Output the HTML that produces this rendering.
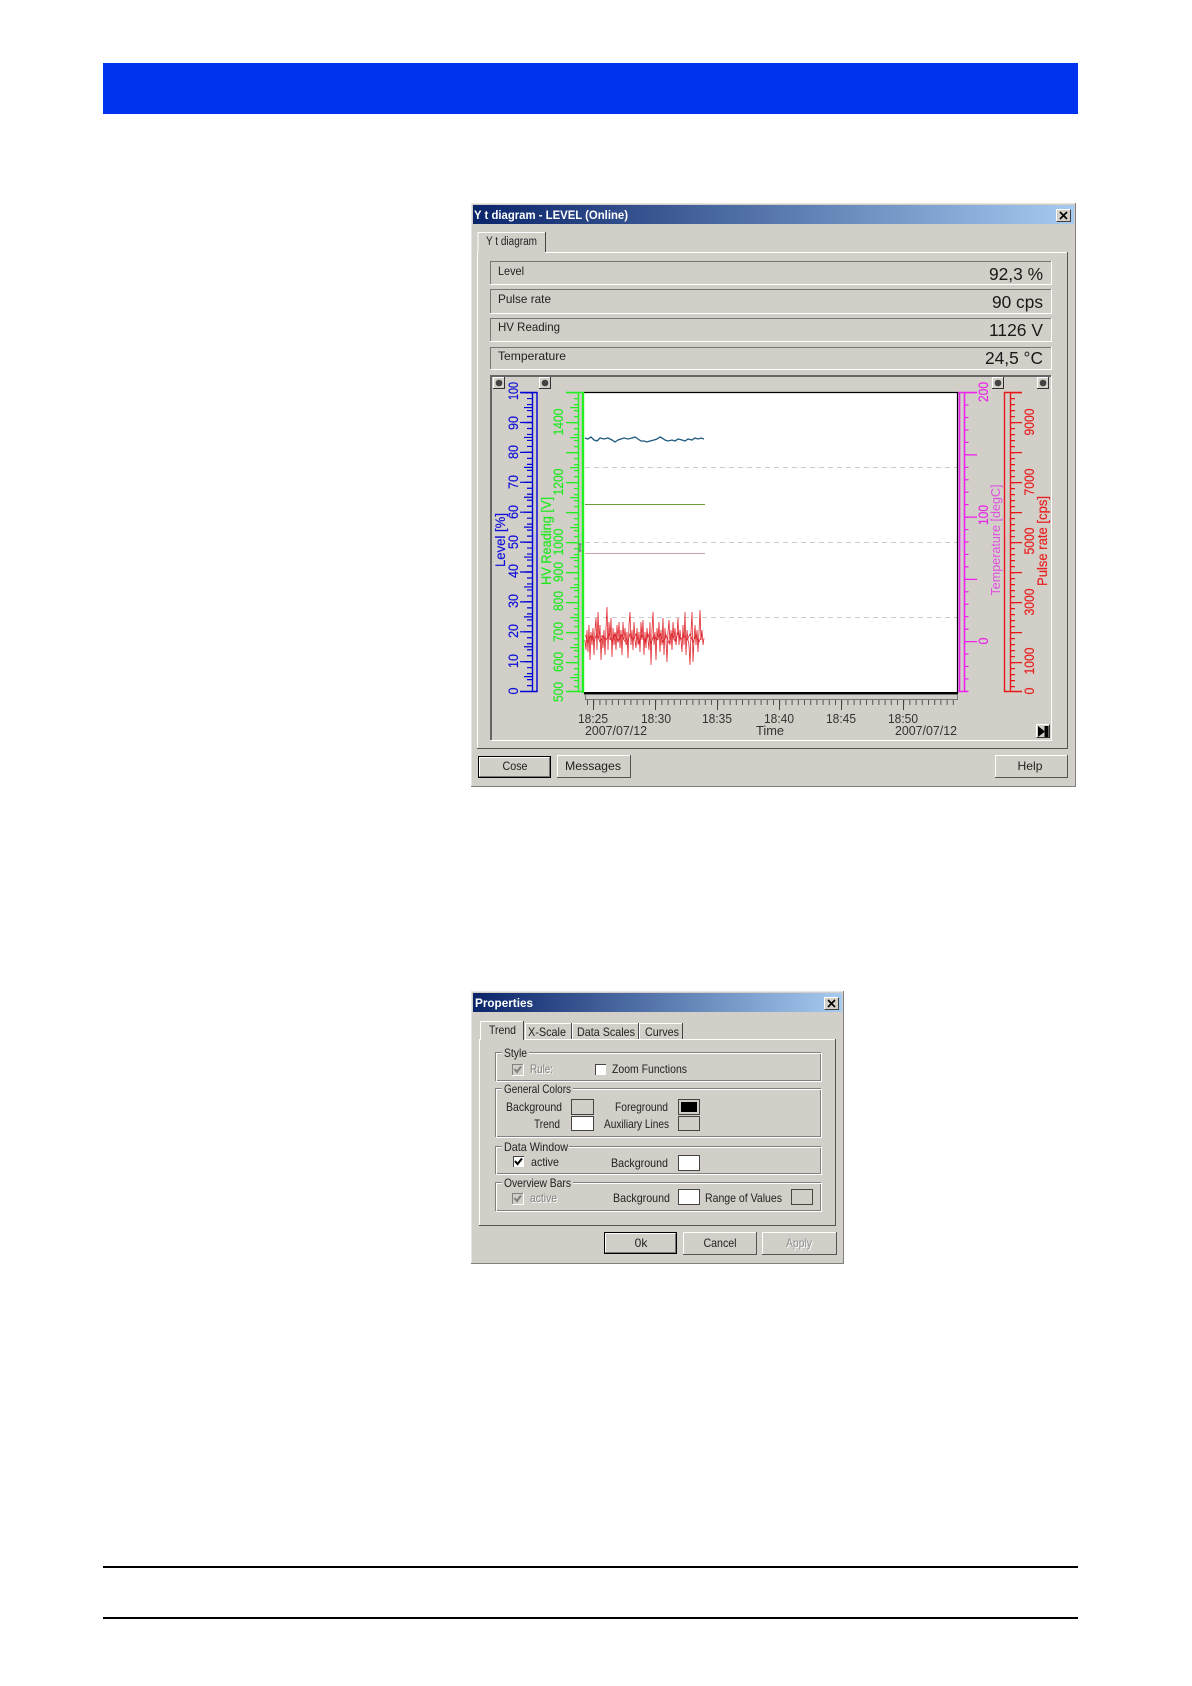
<!DOCTYPE html>
<html><head><meta charset="utf-8"><style>
html,body{margin:0;padding:0;background:#fff}
svg{display:block}
text{font-family:"Liberation Sans",sans-serif}
</style></head><body>
<svg width="1192" height="1686" viewBox="0 0 1192 1686" xmlns="http://www.w3.org/2000/svg">
<defs>
<linearGradient id="tb"><stop offset="0" stop-color="#0a246a"/><stop offset="1" stop-color="#a6caf0"/></linearGradient>
<g id="dot"><rect x="0" y="0" width="12" height="12" fill="#d4d0c8"/><path d="M.5 11.5V.5H11.5" fill="none" stroke="#fff"/><path d="M0 11.5H11.5V0" fill="none" stroke="#333"/><circle cx="6" cy="6" r="3.3" fill="#444"/></g>
<g id="xb"><rect width="15" height="13" fill="#d4d0c8"/><path d="M.5 12.5V.5H14.5" fill="none" stroke="#fff"/><path d="M.5 12.5H14.5V.5" fill="none" stroke="#404040"/><path d="M4 3L11 10M11 3L4 10" stroke="#000" stroke-width="1.6"/></g>
</defs>
<rect width="1192" height="1686" fill="#fff"/>
<rect x="103" y="63" width="975" height="51" fill="#0033ee"/>
<rect x="103" y="1566" width="975" height="2" fill="#000"/>
<rect x="103" y="1617" width="975" height="2" fill="#000"/>

<!-- Window 1 -->
<rect x="471" y="203" width="605" height="584" fill="#d2cfc8"/>
<path d="M471.5 787V203.5H1076" fill="none" stroke="#e8e6e0"/>
<path d="M471 786.5H1075.5V203" fill="none" stroke="#808080"/>
<rect x="473" y="205" width="601" height="19" fill="url(#tb)"/>
<text x="474" y="219" font-size="12" font-weight="bold" fill="#fff" textLength="154" lengthAdjust="spacingAndGlyphs">Y t diagram - LEVEL  (Online)</text>
<use href="#xb" x="1056" y="209"/>
<!-- Panel -->
<path d="M477.5 748V252.5H1067" fill="none" stroke="#fff"/>
<path d="M477 748.5H1067.5V252" fill="none" stroke="#555"/>
<rect x="478" y="233" width="67" height="20" fill="#d2cfc8"/>
<path d="M478 252.5V232.5H545" fill="none" stroke="#fff"/>
<path d="M545.5 232V252" fill="none" stroke="#444"/>
<text x="486" y="245" font-size="11.5" fill="#222" textLength="51" lengthAdjust="spacingAndGlyphs">Y t diagram</text>

<!-- Rows -->
<g fill="none" stroke-width="1">
<path d="M490.5 284V261.5H1051" stroke="#777"/><path d="M490 284.5H1051.5V261" stroke="#fff"/>
<path d="M490.5 313V289.5H1051" stroke="#777"/><path d="M490 313.5H1051.5V289" stroke="#fff"/>
<path d="M490.5 341V318.5H1051" stroke="#777"/><path d="M490 341.5H1051.5V318" stroke="#fff"/>
<path d="M490.5 369V347.5H1051" stroke="#777"/><path d="M490 369.5H1051.5V347" stroke="#fff"/>
</g>
<g font-size="12" fill="#222">
<text x="498" y="275" textLength="26" lengthAdjust="spacingAndGlyphs">Level</text>
<text x="498" y="303" textLength="53" lengthAdjust="spacingAndGlyphs">Pulse rate</text>
<text x="498" y="331" textLength="62" lengthAdjust="spacingAndGlyphs">HV Reading</text>
<text x="498" y="360" textLength="68" lengthAdjust="spacingAndGlyphs">Temperature</text>
</g>
<g font-size="17.5" fill="#1a1a1a">
<text x="989" y="280" textLength="54" lengthAdjust="spacingAndGlyphs">92,3 %</text>
<text x="992" y="308" textLength="51" lengthAdjust="spacingAndGlyphs">90 cps</text>
<text x="989" y="336" textLength="54" lengthAdjust="spacingAndGlyphs">1126 V</text>
<text x="985" y="364" textLength="58" lengthAdjust="spacingAndGlyphs">24,5 °C</text>
</g>

<!-- Chart box -->
<path d="M491 740V376H1051" fill="none" stroke="#666" stroke-width="2"/>
<path d="M491 740.5H1051.5V376" fill="none" stroke="#fff"/>
<use href="#dot" x="493" y="377"/><use href="#dot" x="539" y="377"/><use href="#dot" x="992" y="377"/><use href="#dot" x="1037" y="377"/>
<rect x="1036" y="724" width="14" height="14" fill="#d4d0c8"/>
<path d="M1036.5 737.5V724.5H1049.5" fill="none" stroke="#fff"/><path d="M1036.5 737.5H1049.5V724.5" fill="none" stroke="#333"/>
<path d="M1038 726V737L1045 731.5ZM1044.5 726h4v11h-4z" fill="#000"/>

<!-- Plot -->
<rect x="583" y="392" width="375" height="301" fill="#fff"/>
<g stroke="#ccc" stroke-dasharray="5 4" stroke-width="1">
<path d="M585 467.5H958"/><path d="M585 542.5H958"/><path d="M585 617.5H958"/>
</g>
<path d="M584 392.5H957.5V693" fill="none" stroke="#000" stroke-width="1.2"/>
<rect x="584" y="692" width="374" height="2.5" fill="#000"/>
<polyline fill="none" stroke="#1e5a80" stroke-width="1.3" points="585,438 588,439 591,437 594,440 597,441 600,438 604,439 608,438 612,440 615,442 618,440 621,439 624,438 628,439 632,438 635,437 638,439 641,441 644,441 647,442 650,441 654,440 657,439 660,437 662,438 665,440 668,441 672,440 675,441 678,439 682,440 685,441 688,439 692,440 695,438 698,439 701,438 704,439"/>
<path d="M585 504.5H705" stroke="#6a9a3a" stroke-width="1"/>
<path d="M585 553.5H705" stroke="#c9a4a8" stroke-width="1"/>
<polyline fill="none" stroke="#e0282e" stroke-width=".8" points="585,640 586,650 587,630 588,652 589,625 590,660 591,632 592,645 593,628 594,655 595,630 596,618 597,650 598,612 599,640 600,625 601,660 602,635 603,648 604,630 605,655 606,628 607,607 608,650 609,622 610,640 611,618 612,657 613,628 614,645 615,632 616,650 617,625 618,640 619,622 620,648 621,630 622,655 623,622 624,640 625,628 626,645 627,632 628,658 629,625 630,612 631,645 632,630 633,650 634,622 635,640 636,648 637,628 638,645 639,632 640,652 641,622 642,640 643,620 644,655 645,632 646,648 647,628 648,640 649,650 650,622 651,665 652,630 653,612 654,645 655,632 656,660 657,628 658,640 659,622 660,652 661,630 662,645 663,618 664,655 665,628 666,640 667,662 668,632 669,620 670,645 671,630 672,650 673,622 674,640 675,628 676,645 677,635 678,618 679,645 680,630 681,640 682,652 683,625 684,645 685,612 686,655 687,630 688,640 689,645 690,665 691,632 692,612 693,662 694,640 695,625 696,645 697,630 698,652 699,632 700,610 701,640 702,630 703,645 704,638"/>
<polyline fill="none" stroke="#d8222a" stroke-width=".8" points="585.5,635 588,643 591,635 594,641 597,634 600,642 603,636 606,640 609,634 612,642 615,633 618,642 621,634 624,640 627,644 630,634 633,640 636,634 639,643 642,634 645,642 648,634 651,643 654,635 657,640 660,634 663,642 666,635 669,643 672,634 675,641 678,633 681,640 684,635 687,640 690,634 693,642 696,635 699,642 702,635"/>

<!-- X axis -->
<rect x="585.5" y="694.5" width="372" height="5" fill="#d2cfc8" stroke="#777"/>
<path d="M587 702.5H958" stroke="#555" stroke-width="5" stroke-dasharray="1 5.2"/>
<path d="M593 705H958" stroke="#444" stroke-width="10" stroke-dasharray="1 61"/>
<g font-size="13" fill="#333" text-anchor="middle">
<text x="593" y="723" textLength="30" lengthAdjust="spacingAndGlyphs">18:25</text>
<text x="656" y="723" textLength="30" lengthAdjust="spacingAndGlyphs">18:30</text>
<text x="717" y="723" textLength="30" lengthAdjust="spacingAndGlyphs">18:35</text>
<text x="779" y="723" textLength="30" lengthAdjust="spacingAndGlyphs">18:40</text>
<text x="841" y="723" textLength="30" lengthAdjust="spacingAndGlyphs">18:45</text>
<text x="903" y="723" textLength="30" lengthAdjust="spacingAndGlyphs">18:50</text>
<text x="616" y="735" textLength="62" lengthAdjust="spacingAndGlyphs">2007/07/12</text>
<text x="770" y="735" textLength="28" lengthAdjust="spacingAndGlyphs">Time</text>
<text x="926" y="735" textLength="62" lengthAdjust="spacingAndGlyphs">2007/07/12</text>
</g>

<!-- Blue axis -->
<g stroke="#0000d8" fill="none">
<rect x="532" y="534" width="5" height="16" fill="#c8c6d6" stroke="none"/>
<path d="M520 392.5H537V691.5H520M532.5 392V692" stroke-width="1.4"/>
<path d="M529.5 392V692" stroke-width="5" stroke-dasharray="1.2 4.78"/>
<path d="M528 392V692" stroke-width="8" stroke-dasharray="1.2 13.75"/>
<path d="M526 392V692" stroke-width="12" stroke-dasharray="1.2 28.7"/>
</g>
<g font-size="13.5" fill="#1010d8" stroke="#1010d8" stroke-width=".2" text-anchor="middle">
<text transform="translate(518,391) rotate(-90)" textLength="18" lengthAdjust="spacingAndGlyphs">100</text>
<text transform="translate(518,423) rotate(-90)" textLength="14" lengthAdjust="spacingAndGlyphs">90</text>
<text transform="translate(518,452) rotate(-90)" textLength="14" lengthAdjust="spacingAndGlyphs">80</text>
<text transform="translate(518,482) rotate(-90)" textLength="14" lengthAdjust="spacingAndGlyphs">70</text>
<text transform="translate(518,512) rotate(-90)" textLength="14" lengthAdjust="spacingAndGlyphs">60</text>
<text transform="translate(518,542) rotate(-90)" textLength="14" lengthAdjust="spacingAndGlyphs">50</text>
<text transform="translate(518,571) rotate(-90)" textLength="14" lengthAdjust="spacingAndGlyphs">40</text>
<text transform="translate(518,601) rotate(-90)" textLength="14" lengthAdjust="spacingAndGlyphs">30</text>
<text transform="translate(518,631) rotate(-90)" textLength="14" lengthAdjust="spacingAndGlyphs">20</text>
<text transform="translate(518,661) rotate(-90)" textLength="14" lengthAdjust="spacingAndGlyphs">10</text>
<text transform="translate(518,691) rotate(-90)" textLength="7" lengthAdjust="spacingAndGlyphs">0</text>
<text transform="translate(505,540) rotate(-90)" textLength="54" lengthAdjust="spacingAndGlyphs">Level [%]</text>
</g>

<!-- Green axis -->
<g stroke="#22ee22" fill="none">
<rect x="578" y="534" width="5" height="16" fill="#c8cec8" stroke="none"/>
<path d="M566 392.5H583M566 691.5H583M578.5 392V692" stroke-width="1.4"/>
<path d="M583 392V693" stroke-width="2.4"/>
<path d="M576 392V692" stroke-width="4" stroke-dasharray="1.2 4.8"/>
<path d="M574 392V692" stroke-width="8" stroke-dasharray="1.2 13.8"/>
<path d="M572 392V692" stroke-width="12" stroke-dasharray="1.2 28.8"/>
</g>
<path d="M580 544V551M578.5 544H581.5M578.5 551H581.5" stroke="#666" stroke-width="1" fill="none"/>
<g font-size="13.5" fill="#22e822" stroke="#22e822" stroke-width=".2" text-anchor="middle">
<text transform="translate(563,422) rotate(-90)" textLength="27" lengthAdjust="spacingAndGlyphs">1400</text>
<text transform="translate(563,482) rotate(-90)" textLength="27" lengthAdjust="spacingAndGlyphs">1200</text>
<text transform="translate(563,542) rotate(-90)" textLength="27" lengthAdjust="spacingAndGlyphs">1000</text>
<text transform="translate(563,572) rotate(-90)" textLength="20" lengthAdjust="spacingAndGlyphs">900</text>
<text transform="translate(563,601) rotate(-90)" textLength="20" lengthAdjust="spacingAndGlyphs">800</text>
<text transform="translate(563,632) rotate(-90)" textLength="20" lengthAdjust="spacingAndGlyphs">700</text>
<text transform="translate(563,662) rotate(-90)" textLength="20" lengthAdjust="spacingAndGlyphs">600</text>
<text transform="translate(563,692) rotate(-90)" textLength="20" lengthAdjust="spacingAndGlyphs">500</text>
<text transform="translate(551,541) rotate(-90)" textLength="88" lengthAdjust="spacingAndGlyphs">HV Reading [V]</text>
</g>

<!-- Magenta axis -->
<g stroke="#ee22ee" fill="none">
<rect x="959" y="534" width="5" height="16" fill="#d8c4d8" stroke="none"/>
<path d="M959.5 392V692M964.5 392V692M958 392.5H977M958 691.5H968" stroke-width="1.6"/>
<path d="M966.5 392V692" stroke-width="4" stroke-dasharray="1.2 11.25"/>
<path d="M971 392V692" stroke-width="12" stroke-dasharray="1.2 61.05"/>
</g>
<g font-size="13.5" fill="#e828e8" stroke="#e828e8" stroke-width=".2" text-anchor="middle">
<text transform="translate(988,392) rotate(-90)" textLength="20" lengthAdjust="spacingAndGlyphs">200</text>
<text transform="translate(988,515) rotate(-90)" textLength="20" lengthAdjust="spacingAndGlyphs">100</text>
<text transform="translate(988,641) rotate(-90)" textLength="7" lengthAdjust="spacingAndGlyphs">0</text>
<text transform="translate(1000,540) rotate(-90)" textLength="111" lengthAdjust="spacingAndGlyphs" font-size="13" stroke-width="0" fill="#e050e0">Temperature [degC]</text>
</g>

<!-- Red axis -->
<g stroke="#e81818" fill="none">
<rect x="1005" y="534" width="5" height="16" fill="#d8c8c4" stroke="none"/>
<path d="M1022 392.5H1004.5V691.5H1022M1010.5 392V692" stroke-width="1.4"/>
<path d="M1012.5 392V692" stroke-width="5" stroke-dasharray="1.2 4.8"/>
<path d="M1016 392V692" stroke-width="12" stroke-dasharray="1.2 28.8"/>
</g>
<g font-size="13.5" fill="#e82020" stroke="#e82020" stroke-width=".2" text-anchor="middle">
<text transform="translate(1034,422) rotate(-90)" textLength="27" lengthAdjust="spacingAndGlyphs">9000</text>
<text transform="translate(1034,482) rotate(-90)" textLength="27" lengthAdjust="spacingAndGlyphs">7000</text>
<text transform="translate(1034,541) rotate(-90)" textLength="27" lengthAdjust="spacingAndGlyphs">5000</text>
<text transform="translate(1034,602) rotate(-90)" textLength="27" lengthAdjust="spacingAndGlyphs">3000</text>
<text transform="translate(1034,661) rotate(-90)" textLength="27" lengthAdjust="spacingAndGlyphs">1000</text>
<text transform="translate(1034,691) rotate(-90)" textLength="7" lengthAdjust="spacingAndGlyphs">0</text>
<text transform="translate(1047,541) rotate(-90)" textLength="90" lengthAdjust="spacingAndGlyphs">Pulse rate [cps]</text>
</g>

<!-- Window 1 buttons -->
<rect x="478.5" y="756.5" width="72" height="21" fill="#d2cfc8" stroke="#000"/>
<path d="M479.5 776V757.5H549.5" fill="none" stroke="#fff"/><path d="M479.5 776.5H549.5V757.5" fill="none" stroke="#777"/>
<path d="M557.5 777V755.5H630" fill="none" stroke="#fff"/><path d="M557 777.5H630.5V755" fill="none" stroke="#555"/>
<path d="M995.5 777V755.5H1067" fill="none" stroke="#fff"/><path d="M995 777.5H1067.5V755" fill="none" stroke="#555"/>
<g font-size="12" fill="#222" text-anchor="middle">
<text x="515" y="770" textLength="25" lengthAdjust="spacingAndGlyphs">Cose</text>
<text x="593" y="770" textLength="56" lengthAdjust="spacingAndGlyphs">Messages</text>
<text x="1030" y="770" textLength="25" lengthAdjust="spacingAndGlyphs">Help</text>
</g>

<!-- Window 2 -->
<rect x="471" y="991" width="373" height="273" fill="#d2cfc8"/>
<path d="M471.5 1264V991.5H844" fill="none" stroke="#e8e6e0"/>
<path d="M471 1263.5H843.5V991" fill="none" stroke="#808080"/>
<rect x="473" y="993" width="369" height="19" fill="url(#tb)"/>
<text x="475" y="1007" font-size="11.5" font-weight="bold" fill="#fff" textLength="58" lengthAdjust="spacingAndGlyphs">Properties</text>
<use href="#xb" x="824" y="997"/>

<path d="M479.5 1225V1039.5H835" fill="none" stroke="#fff"/>
<path d="M479 1225.5H835.5V1039" fill="none" stroke="#555"/>
<rect x="480" y="1022" width="43" height="19" fill="#d2cfc8"/>
<path d="M480.5 1040V1021.5H523" fill="none" stroke="#fff"/><path d="M523.5 1021V1040" stroke="#444"/>
<path d="M525.5 1039V1023.5H571" fill="none" stroke="#fff"/><path d="M571.5 1023V1039" stroke="#444"/>
<path d="M572.5 1039V1023.5H638" fill="none" stroke="#fff"/><path d="M638.5 1023V1039" stroke="#444"/>
<path d="M639.5 1039V1023.5H682" fill="none" stroke="#fff"/><path d="M682.5 1023V1039" stroke="#444"/>
<g font-size="12" fill="#222">
<text x="489" y="1034" textLength="27" lengthAdjust="spacingAndGlyphs">Trend</text>
<text x="528" y="1036" textLength="38" lengthAdjust="spacingAndGlyphs">X-Scale</text>
<text x="577" y="1036" textLength="58" lengthAdjust="spacingAndGlyphs">Data Scales</text>
<text x="645" y="1036" textLength="34" lengthAdjust="spacingAndGlyphs">Curves</text>
</g>

<!-- Groups -->
<g fill="none">
<rect x="495.5" y="1052.5" width="325" height="28" stroke="#808080"/><rect x="496.5" y="1053.5" width="325" height="28" stroke="#fff"/>
<rect x="495.5" y="1088.5" width="325" height="48" stroke="#808080"/><rect x="496.5" y="1089.5" width="325" height="48" stroke="#fff"/>
<rect x="495.5" y="1146.5" width="325" height="27" stroke="#808080"/><rect x="496.5" y="1147.5" width="325" height="27" stroke="#fff"/>
<rect x="495.5" y="1182.5" width="325" height="28" stroke="#808080"/><rect x="496.5" y="1183.5" width="325" height="28" stroke="#fff"/>
</g>
<g fill="#d2cfc8">
<rect x="502" y="1050" width="27" height="6"/><rect x="502" y="1086" width="71" height="6"/>
<rect x="502" y="1144" width="67" height="6"/><rect x="502" y="1180" width="71" height="6"/>
</g>
<g font-size="12" fill="#222">
<text x="504" y="1057" textLength="23" lengthAdjust="spacingAndGlyphs">Style</text>
<text x="504" y="1093" textLength="67" lengthAdjust="spacingAndGlyphs">General Colors</text>
<text x="504" y="1151" textLength="64" lengthAdjust="spacingAndGlyphs">Data Window</text>
<text x="504" y="1187" textLength="67" lengthAdjust="spacingAndGlyphs">Overview Bars</text>
<text x="612" y="1073" textLength="75" lengthAdjust="spacingAndGlyphs">Zoom Functions</text>
<text x="506" y="1111" textLength="56" lengthAdjust="spacingAndGlyphs">Background</text>
<text x="615" y="1111" textLength="53" lengthAdjust="spacingAndGlyphs">Foreground</text>
<text x="534" y="1128" textLength="26" lengthAdjust="spacingAndGlyphs">Trend</text>
<text x="604" y="1128" textLength="65" lengthAdjust="spacingAndGlyphs">Auxiliary Lines</text>
<text x="531" y="1166" textLength="28" lengthAdjust="spacingAndGlyphs">active</text>
<text x="611" y="1167" textLength="57" lengthAdjust="spacingAndGlyphs">Background</text>
<text x="613" y="1202" textLength="57" lengthAdjust="spacingAndGlyphs">Background</text>
<text x="705" y="1202" textLength="77" lengthAdjust="spacingAndGlyphs">Range of Values</text>
</g>
<g font-size="12">
<text x="531" y="1074" fill="#fff" textLength="23" lengthAdjust="spacingAndGlyphs">Rule:</text>
<text x="530" y="1073" fill="#808080" textLength="23" lengthAdjust="spacingAndGlyphs">Rule:</text>
<text x="531" y="1203" fill="#fff" textLength="27" lengthAdjust="spacingAndGlyphs">active</text>
<text x="530" y="1202" fill="#808080" textLength="27" lengthAdjust="spacingAndGlyphs">active</text>
</g>
<!-- Checkboxes -->
<rect x="512" y="1064" width="11" height="11" fill="#d2cfc8"/><path d="M512.5 1075V1064.5H523" fill="none" stroke="#808080"/><path d="M512 1075.5H523.5V1064" fill="none" stroke="#fff"/><path d="M514.5 1069L517 1072L521 1066.5" fill="none" stroke="#808080" stroke-width="2"/>
<rect x="595" y="1064" width="11" height="11" fill="#fff"/><path d="M595.5 1075V1064.5H606" fill="none" stroke="#444"/>
<rect x="513" y="1156" width="11" height="11" fill="#fff"/><path d="M513.5 1167V1156.5H524" fill="none" stroke="#444"/><path d="M515 1161L517.5 1164L522 1158.5" fill="none" stroke="#000" stroke-width="2"/>
<rect x="512" y="1193" width="11" height="11" fill="#d2cfc8"/><path d="M512.5 1204V1193.5H523" fill="none" stroke="#808080"/><path d="M512 1204.5H523.5V1193" fill="none" stroke="#fff"/><path d="M514.5 1198L517 1201L521 1195.5" fill="none" stroke="#808080" stroke-width="2"/>
<!-- Swatches -->
<g stroke="#444">
<rect x="571.5" y="1099.5" width="22" height="15" fill="#d2cfc8"/>
<rect x="678.5" y="1099.5" width="21" height="15" fill="#d2cfc8"/>
<rect x="571.5" y="1116.5" width="22" height="14" fill="#fff"/>
<rect x="678.5" y="1116.5" width="21" height="14" fill="#d2cfc8"/>
<rect x="678.5" y="1155.5" width="21" height="15" fill="#fff"/>
<rect x="678.5" y="1189.5" width="21" height="15" fill="#fff"/>
<rect x="791.5" y="1189.5" width="21" height="15" fill="#d2cfc8"/>
</g>
<rect x="681" y="1102" width="16" height="10" fill="#000"/>
<!-- Window 2 buttons -->
<rect x="604.5" y="1232.5" width="72" height="21" fill="#d2cfc8" stroke="#000"/>
<path d="M605.5 1252V1233.5H675.5" fill="none" stroke="#fff"/><path d="M605.5 1252.5H675.5V1233.5" fill="none" stroke="#777"/>
<path d="M683.5 1254V1232.5H756" fill="none" stroke="#fff"/><path d="M683 1254.5H756.5V1232" fill="none" stroke="#555"/>
<path d="M762.5 1254V1232.5H836" fill="none" stroke="#fff"/><path d="M762 1254.5H836.5V1232" fill="none" stroke="#555"/>
<g font-size="12" text-anchor="middle">
<text x="641" y="1247" fill="#222">0k</text>
<text x="720" y="1247" fill="#222" textLength="33" lengthAdjust="spacingAndGlyphs">Cancel</text>
<text x="800" y="1248" fill="#fff" textLength="26" lengthAdjust="spacingAndGlyphs">Apply</text>
<text x="799" y="1247" fill="#909090" textLength="26" lengthAdjust="spacingAndGlyphs">Apply</text>
</g>
</svg>
</body></html>
